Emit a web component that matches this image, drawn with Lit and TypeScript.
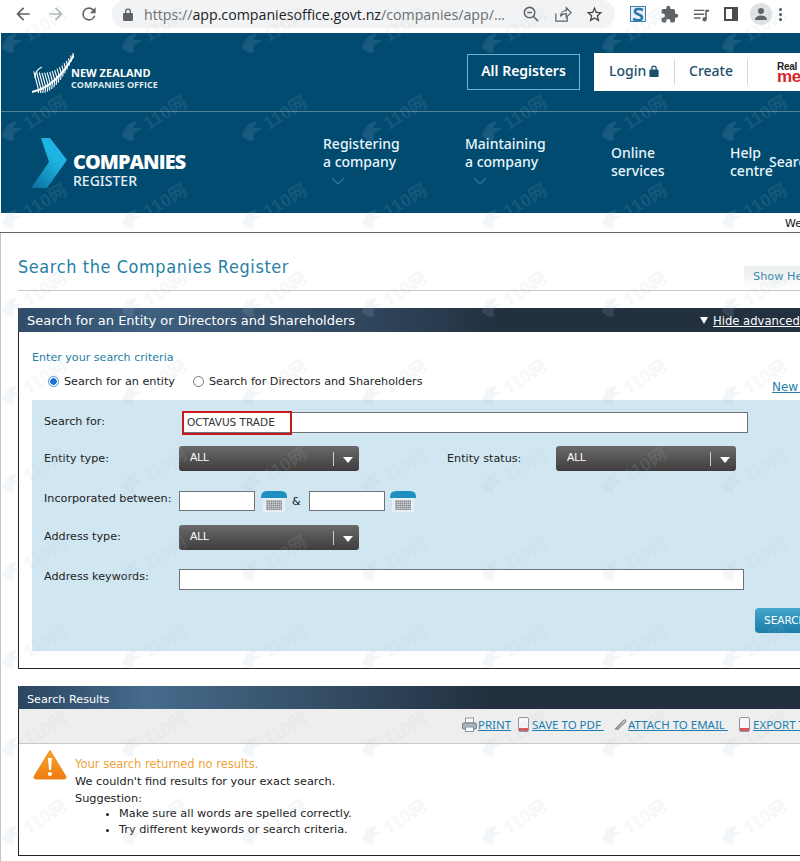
import { LitElement, html, css, svg } from "lit";
import { customElement } from "lit/decorators.js";

const fernFronds = (() => {
  let d = "";
  const n = 17;
  for (let i = 0; i < n; i++) {
    const t = 0.14 + (0.84 * i) / (n - 1);
    const u = 1 - t;
    const x = u * u * 2 + 2 * u * t * 26 + t * t * 44;
    const y = u * u * 39 + 2 * u * t * 34 + t * t * 2;
    const up = 20 * u * u + 4;
    const dn = 8 * Math.sin(Math.PI * t) + 1;
    d += `M${x.toFixed(1)} ${y.toFixed(1)}L${(x - 3 * u - up * 0.12).toFixed(1)} ${(y - up).toFixed(1)}`;
    d += `M${x.toFixed(1)} ${y.toFixed(1)}L${(x - dn * 0.1).toFixed(1)} ${(y + dn * 0.8).toFixed(1)}`;
  }
  return d;
})();

const marks = Array.from({ length: 7 * 11 }, (_, i) => i);

const ic = {
  back: svg`<path d="M20 11H7.83l5.59-5.59L12 4l-8 8 8 8 1.41-1.41L7.83 13H20v-2z"/>`,
  reload: svg`<path d="M17.65 6.35A7.96 7.96 0 0 0 12 4a8 8 0 1 0 7.73 10h-2.08A6 6 0 1 1 12 6c1.66 0 3.14.69 4.22 1.78L13 11h7V4l-2.35 2.35z"/>`,
  star: svg`<path d="M22 9.24l-7.19-.62L12 2 9.19 8.63 2 9.24l5.46 4.73L5.82 21 12 17.27 18.18 21l-1.63-7.03L22 9.24zM12 15.4l-3.76 2.27 1-4.28-3.32-2.88 4.38-.38L12 6.1l1.71 4.04 4.38.38-3.32 2.88 1 4.28L12 15.4z"/>`,
  puzzle: svg`<path d="M20.5 11H19V7a2 2 0 0 0-2-2h-4V3.5a2.5 2.5 0 0 0-5 0V5H4a2 2 0 0 0-2 2v3.8h1.5a2.7 2.7 0 0 1 0 5.4H2V20a2 2 0 0 0 2 2h3.8v-1.5a2.7 2.7 0 0 1 5.4 0V22H17a2 2 0 0 0 2-2v-4h1.5a2.5 2.5 0 0 0 0-5z"/>`,
};

@customElement("app-root")
export class AppRoot extends LitElement {
  static styles = css`
    :host { display: block; position: relative; width: 800px; height: 861px; overflow: hidden; background: #fff; font-family: "DejaVu Sans", sans-serif; font-size: 11px; color: #222; }
    a { color: inherit; }
    svg { display: block; flex: none; }

    .chrome { height: 33px; padding-bottom: 5px; box-sizing: border-box; display: flex; align-items: center; background: #fff; }
    .nav-ic { width: 20px; height: 20px; fill: #5f6368; margin-left: 13px; }
    .nav-ic.first { margin-left: 13px; }
    .nav-ic.off { fill: #b4b7ba; }
    .omni { margin-left: 13px; width: 503px; height: 28px; flex: none; border-radius: 14px; background: #f1f3f4; display: flex; align-items: center; padding-left: 11px; box-sizing: border-box; }
    .lock { width: 10px; height: 13px; fill: #5f6368; }
    .url { margin-left: 11px; width: 364px; flex: none; font-family: "Open Sans", sans-serif; font-size: 14.2px; letter-spacing: 0; color: #6a6e72; white-space: nowrap; overflow: hidden; }
    .url b { font-weight: 400; color: #202124; }
    .omni-ic { width: 19px; height: 19px; fill: #5f6368; margin-left: 13px; }
    .ext { display: flex; align-items: center; margin-left: 15px; }
    .ext-s { width: 16px; height: 16px; margin-right: 14px; }
    .ext-ic { width: 19px; height: 19px; fill: #5f6368; margin-right: 13px; }
    .sidebar { width: 14px; height: 14px; border: 2px solid #4a4d50; box-sizing: border-box; border-right-width: 6px; margin: 0 12px 0 0; }
    .avatar { width: 22px; height: 22px; border-radius: 50%; background: #dfe1e5; display: flex; align-items: center; justify-content: center; }
    .dots { margin-left: 7px; display: flex; flex-direction: column; gap: 2px; }
    .dots i { width: 3px; height: 3px; border-radius: 50%; background: #4a4d50; }

    header { height: 180px; margin-left: 1px; background: #014a70; color: #fff; font-family: "Noto Sans", sans-serif; }
    .h-top { height: 79px; border-bottom: 1px solid #4f8199; display: flex; align-items: flex-start; box-sizing: border-box; }
    .nz { margin: 20px 0 0 29px; width: 437px; flex: none; display: flex; }
    .nz-text { margin: 14px 0 0 -3px; font-family: "Open Sans", sans-serif; font-weight: 700; line-height: 12px; white-space: nowrap; }
    .nz-text div:first-child { font-size: 11px; }
    .nz-text div:last-child { font-size: 9px; color: #dfe9ef; }
    .all { margin-top: 21px; width: 113px; flex: none; height: 36px; padding-bottom: 3px; border: 1px solid #69b4d6; box-sizing: border-box; display: flex; align-items: center; justify-content: center; font-size: 14px; font-weight: 600; }
    .tools { margin: 20px 0 0 14px; width: 300px; flex: none; height: 38px; background: #fff; color: #1d4f6d; display: flex; align-items: center; font-size: 14px; font-weight: 500; }
    .login { width: 81px; flex: none; padding: 0 0 3px 15px; height: 26px; box-sizing: border-box; display: flex; align-items: center; gap: 3px; border-right: 1px solid #d8d8d8; }
    .create { width: 73px; flex: none; padding: 0 0 3px 14px; height: 26px; box-sizing: border-box; display: flex; align-items: center; border-right: 1px solid #d8d8d8; }
    .real { margin-left: 29px; font-family: "Liberation Sans", sans-serif; color: #222; font-size: 10px; line-height: 9px; letter-spacing: -0.3px; font-weight: 700; }
    .real span { display: block; color: #d8232a; font-size: 17px; line-height: 12px; font-weight: 700; }
    .h-nav { height: 101px; display: flex; align-items: flex-start; }
    .brand { margin: 26px 0 0 30px; width: 292px; flex: none; display: flex; }
    .brand-t { margin: 12px 0 0 6px; line-height: 1; }
    .brand-t strong { display: block; font-family: "Open Sans", sans-serif; font-weight: 800; font-size: 19.8px; letter-spacing: -0.9px; line-height: 23px; }
    .brand-t span { display: block; font-size: 14px; line-height: 16px; font-weight: 500; color: #e6f0f5; }
    .item { font-size: 14px; font-weight: 500; line-height: 18px; color: #e8f6fb; white-space: nowrap; flex: none; }
    .item.down { margin-top: 23px; }
    .item.flat { margin-top: 32px; }
    .i1 { width: 142px; }
    .i2 { width: 146px; }
    .i3 { width: 119px; }
    .i4 { width: 39px; }
    .chev { margin: 7px 0 0 8px; width: 14px; height: 7px; fill: none; stroke: #2b7d9e; stroke-width: 1.2; }
    .srch { margin-top: 40px; font-size: 14px; font-weight: 500; color: #e8f6fb; white-space: nowrap; }

    .strip { height: 20px; border-bottom: 1px solid #666; box-sizing: border-box; display: flex; justify-content: flex-end; align-items: flex-end; font-size: 11px; color: #111; line-height: 17px; }
    .strip span { width: 15px; overflow: hidden; white-space: nowrap; }

    main { border-left: 1px solid #c4c4c4; padding-left: 17px; height: 628px; }
    .ttl-row { width: 850px; height: 58px; border-bottom: 1px solid #c8c8c8; box-sizing: border-box; display: flex; align-items: flex-end; }
    .ttl { width: 726px; flex: none; font-size: 17.5px; line-height: 22px; padding-bottom: 12px; color: #2680a6; letter-spacing: 0.67px; font-family: "DejaVu Sans", sans-serif; font-weight: 400; margin: 0; transform: scaleX(0.92); transform-origin: left; white-space: nowrap; }
    .tab { width: 100px; height: 24px; padding-left: 9px; box-sizing: border-box; background: linear-gradient(#e9eded, #fff); border-radius: 3px 3px 0 0; color: #3f87ad; font-size: 11.3px; line-height: 22px; white-space: nowrap; }

    .panel { margin-top: 17px; width: 900px; border-left: 1px solid #222; border-bottom: 1px solid #222; box-sizing: border-box; }
    .p-head { height: 24px; display: flex; align-items: center; color: #fff; padding: 1px 0 0 9px; box-sizing: border-box; background: linear-gradient(90deg, #2f4c69 0, #3f6080 130px, #2d4257 380px, #22303f 480px); border-radius: 3px 3px 0 0; margin-left: -1px; font-size: 13px; }
    .p-head .name { width: 673px; flex: none; white-space: nowrap; }
    .tri { width: 8px; height: 7px; fill: #fff; margin-right: 5px; }
    .p-head u { font-size: 11.6px; white-space: nowrap; }
    .crit { margin: 19px 0 0 13px; color: #2680a6; font-size: 11.1px; line-height: 14px; }
    .radios { margin: 9px 0 0 13px; padding-left: 16px; width: 800px; box-sizing: border-box; height: 14px; display: flex; align-items: center; font-size: 11.2px; white-space: nowrap; }
    .radio { width: 11px; height: 11px; box-sizing: border-box; border: 1px solid #777; border-radius: 50%; background: #fff; margin-right: 4px; flex: none; }
    .radio.on { border-color: #4a90d9; background: radial-gradient(circle, #1a73d8 0 3px, #fff 3.6px); margin-right: 5px; }
    .gap2 { margin-left: 18px; margin-right: 5px; }
    .new { margin-left: auto; width: 60px; flex: none; padding-top: 12px; color: #2c7fa8; text-decoration: underline; font-size: 12px; }

    .form { margin: 12px 0 0 13px; width: 868px; height: 251px; padding: 12px 0 0 12px; box-sizing: border-box; background: #d0e6f1; }
    .row { display: flex; align-items: center; }
    .lbl { width: 135px; flex: none; font-size: 11.2px; white-space: nowrap; }
    .up3 { margin-bottom: 3px; }
    .up6 { margin-bottom: 6px; }
    .up7 { margin-bottom: 7px; }
    .ip { background: #fff; border: 1px solid #6d7277; box-sizing: border-box; height: 21px; font-size: 10.5px; line-height: 19px; padding-left: 4px; }
    .query { margin-left: 3px; width: 566px; flex: none; position: relative; color: #333; }
    .redbox { position: absolute; left: -1px; top: -2px; width: 110px; height: 24px; border: 2px solid #c8171d; box-sizing: border-box; }
    .r2 { margin-top: 13px; }
    .r3 { margin-top: 19px; }
    .r4 { margin-top: 13px; }
    .r5 { margin-top: 19px; }
    .sel { width: 180px; height: 25px; border-radius: 3px; background: linear-gradient(#6a6a6a, #3f3d3d); color: #fff; font-family: "Liberation Sans", sans-serif; font-size: 11px; display: flex; align-items: flex-start; padding: 5px 0 0 11px; box-sizing: border-box; flex: none; }
    .sel span { width: 143px; flex: none; letter-spacing: -0.2px; }
    .sel i { width: 1px; height: 14px; background: #ccc; margin-top: 1px; }
    .sel svg { width: 10px; height: 6px; fill: #fff; margin: 6px 0 0 9px; }
    .lbl2 { margin-left: 88px; width: 109px; flex: none; font-size: 11.2px; white-space: nowrap; }
    .date { width: 76px; height: 20px; flex: none; }
    .cal { width: 26px; height: 22px; margin-left: 6px; }
    .amp { margin: 0 11px 0 5px; font-size: 11px; width: 6px; flex: none; }
    .cal2 { margin-left: 5px; }
    .kw { width: 565px; flex: none; }
    .btn { margin: 18px 0 0 711px; width: 100px; height: 25px; border-radius: 4px; background: linear-gradient(#45a7cc, #1a7ca8); color: #fff; font-size: 10.5px; line-height: 24px; padding-left: 9px; box-sizing: border-box; }
    .form-end { height: 17px; }

    .p-head.res { height: 23px; font-size: 11.2px; padding-top: 3px; background: linear-gradient(90deg, #2a4560 0, #466b8c 130px, #2e4459 360px, #22303f 470px); }
    .bar { height: 35px; padding-bottom: 3px; background: #eee; border-bottom: 1px solid #c8c8c8; box-sizing: border-box; display: flex; align-items: center; padding-left: 443px; color: #1b7cb0; font-family: "Noto Sans", sans-serif; font-size: 11.5px; white-space: nowrap; }
    .bar svg { width: 15px; height: 15px; margin-right: 1px; }
    .t1 { width: 38px; flex: none; }
    .t2 { width: 80px; flex: none; }
    .t3 { width: 109px; flex: none; }
    .body { display: flex; height: 111px; padding: 5px 0 0 14px; box-sizing: border-box; }
    .warn { width: 34px; height: 31px; }
    .msg { margin: 6px 0 0 8px; font-size: 11.3px; line-height: 16.4px; color: #222; }
    .msg .o { color: #eea33a; font-size: 11.5px; line-height: 19px; }
    .msg .sug { margin-top: 1px; }
    .msg ul { margin: -2px 0 0; padding: 0 0 0 44px; list-style: disc; }

    .wm { position: absolute; left: -27px; top: -14px; display: grid; grid-template-columns: repeat(7, 120px); grid-auto-rows: 88px; pointer-events: none; }
    .mk { display: flex; align-items: center; justify-content: center; gap: 2px; transform: rotate(-32deg); color: rgba(180, 200, 210, 0.13); font-family: "Liberation Sans", "Noto Sans CJK SC", sans-serif; font-size: 18px; font-weight: 700; white-space: nowrap; }
    .mk svg { width: 24px; height: 20px; fill: rgba(180, 200, 210, 0.14); }
  `;

  private toolDoc() {
    return html`<svg viewBox="0 0 15 15"><rect x="2.500" y=".5" width="10" height="14" rx="1.500" fill="#f8f8fa" stroke="#8b97a5"/><rect x="3" y="11" width="9" height="3" fill="#d9545c"/></svg>`;
  }

  private cal(extra = "") {
    const cells = [];
    for (let y = 0; y < 5; y++) for (let x = 0; x < 8; x++) cells.push(svg`<rect x=${5.5 + x * 2} y=${10.5 + y * 2} width="1.300" height="1.300" fill="#555"/>`);
    return html`<svg class="cal ${extra}" viewBox="0 0 26 22"><rect x="2" y="7" width="22" height="15" fill="#e6eff3"/><path d="M0 7Q0 1 6 1H20Q26 1 26 7V8H0Z" fill="#1f8fc0"/>${cells}</svg>`;
  }

  private sel() {
    return html`<div class="sel"><span>ALL</span><i></i><svg viewBox="0 0 10 6"><path d="M0 0H10L5 6Z"/></svg></div>`;
  }

  render() {
    return html`
      <div class="chrome">
        <svg class="nav-ic first" viewBox="0 0 24 24">${ic.back}</svg>
        <svg class="nav-ic off" viewBox="0 0 24 24"><g transform="rotate(180 12 12)">${ic.back}</g></svg>
        <svg class="nav-ic" viewBox="0 0 24 24">${ic.reload}</svg>
        <div class="omni">
          <svg class="lock" viewBox="0 0 10 13"><path d="M2 5V3.5a3 3 0 0 1 6 0V5h1a1 1 0 0 1 1 1v6a1 1 0 0 1-1 1H1a1 1 0 0 1-1-1V6a1 1 0 0 1 1-1zm1.3 0h3.4V3.5a1.7 1.7 0 0 0-3.4 0z"/></svg>
          <div class="url">https://<b>app.companiesoffice.govt.nz</b>/companies/app/...</div>
          <svg class="omni-ic" viewBox="0 0 20 20" fill="none" stroke="#5f6368" stroke-width="1.6"><circle cx="9" cy="8" r="5.5" fill="none"/><path d="M13 12l5 5M6.5 8h5" fill="none"/></svg>
          <svg class="omni-ic" viewBox="0 0 20 20"><path d="M3 9v8h12v-4M8 12c0-4 3-6 6-6V3l5 5-5 5V9c-3 0-5 1-6 3z" fill="none" stroke="#5f6368" stroke-width="1.3"/></svg>
          <svg class="omni-ic" viewBox="0 0 24 24" style="fill:#444">${ic.star}</svg>
        </div>
        <div class="ext">
          <svg class="ext-s" viewBox="0 0 16 16"><rect x=".5" y=".5" width="15" height="15" fill="#e9f1f6" stroke="#3c7fa8"/><path d="M13 4C9 2 4 3 5 6s8 2 7 6-6 2-9 1" fill="none" stroke="#2c78b0" stroke-width="2.6"/></svg>
          <svg class="ext-ic" viewBox="0 0 24 24">${ic.puzzle}</svg>
          <svg class="ext-ic" viewBox="0 0 20 20"><path d="M2 5h11v1.4H2zM2 9h11v1.4H2zM2 13h7v1.4H2zM14 5h4v2h-2.4v8a2.3 2.3 0 1 1-1.6-2.2z"/></svg>
          <div class="sidebar"></div>
          <div class="avatar"><svg width="14" height="14" viewBox="0 0 14 14" fill="#5f6368"><circle cx="7" cy="4" r="3"/><path d="M1 13c0-3 3-4.5 6-4.5s6 1.500 6 4.500z"/></svg></div>
          <div class="dots"><i></i><i></i><i></i></div>
        </div>
      </div>

      <header>
        <div class="h-top">
          <div class="nz">
            <svg width="44" height="40" viewBox="0 0 44 40" fill="none" stroke="#fff">
              <path d="${fernFronds}" stroke-width="1.100"/>
              <path d="M5 25Q5 17 12 14" stroke-width="1.200"/>
              <path d="M2 39Q26 34 44 2" stroke-width="2"/>
            </svg>
            <div class="nz-text"><div>NEW ZEALAND</div><div>COMPANIES OFFICE</div></div>
          </div>
          <div class="all">All Registers</div>
          <div class="tools">
            <div class="login">Login <svg width="10" height="12" viewBox="0 0 10 13" fill="#1d4f6d"><path d="M2 5V3.500a3 3 0 0 1 6 0V5h1a1 1 0 0 1 1 1v6a1 1 0 0 1-1 1H1a1 1 0 0 1-1-1V6a1 1 0 0 1 1-1zm1.300 0h3.400V3.500a1.700 1.700 0 0 0-3.400 0z"/></svg></div>
            <div class="create">Create</div>
            <div class="real">Real<span>me</span></div>
          </div>
        </div>
        <div class="h-nav">
          <div class="brand">
            <svg width="36" height="50" viewBox="0 0 36 50">
              <defs><linearGradient id="cg" x1="0" y1="1" x2="0.5" y2="0.3"><stop offset="0" stop-color="#0c6d9c"/><stop offset="1" stop-color="#1db4e4"/></linearGradient></defs>
              <path d="M10 0H19L36 22L16 50H0L18 24Z" fill="url(#cg)"/>
            </svg>
            <div class="brand-t"><strong>COMPANIES</strong><span>REGISTER</span></div>
          </div>
          <div class="item down i1">Registering<br />a company<svg class="chev" viewBox="0 0 14 7"><path d="M1 0L7 6L13 0"/></svg></div>
          <div class="item down i2">Maintaining<br />a company<svg class="chev" viewBox="0 0 14 7"><path d="M1 0L7 6L13 0"/></svg></div>
          <div class="item flat i3">Online<br />services</div>
          <div class="item flat i4">Help<br />centre</div>
          <div class="srch">Search</div>
        </div>
      </header>

      <div class="strip"><span>Welcome</span></div>

      <main>
        <div class="ttl-row">
          <h1 class="ttl">Search the Companies Register</h1>
          <div class="tab">Show Help</div>
        </div>

        <section class="panel">
          <div class="p-head">
            <div class="name">Search for an Entity or Directors and Shareholders</div>
            <svg class="tri" viewBox="0 0 8 7"><path d="M0 0H8L4 7Z"/></svg>
            <u>Hide advanced search</u>
          </div>
          <div class="crit">Enter your search criteria</div>
          <div class="radios">
            <span class="radio on"></span>Search for an entity
            <span class="radio gap2"></span>Search for Directors and Shareholders
            <a class="new">New to</a>
          </div>
          <div class="form">
            <div class="row">
              <div class="lbl up3">Search for:</div>
              <div class="ip query">OCTAVUS TRADE<div class="redbox"></div></div>
            </div>
            <div class="row r2">
              <div class="lbl">Entity type:</div>
              ${this.sel()}
              <div class="lbl2">Entity status:</div>
              ${this.sel()}
            </div>
            <div class="row r3">
              <div class="lbl up6">Incorporated between:</div>
              <div class="ip date"></div>
              ${this.cal()}
              <div class="amp">&amp;</div>
              <div class="ip date"></div>
              ${this.cal("cal2")}
            </div>
            <div class="row r4">
              <div class="lbl up3">Address type:</div>
              ${this.sel()}
            </div>
            <div class="row r5">
              <div class="lbl up7">Address keywords:</div>
              <div class="ip kw"></div>
            </div>
            <div class="btn">SEARCH</div>
          </div>
          <div class="form-end"></div>
        </section>

        <section class="panel">
          <div class="p-head res">Search Results</div>
          <div class="bar">
            <svg viewBox="0 0 15 15"><rect x="3.500" y="1" width="8" height="5" fill="#fff" stroke="#8a96a3"/><rect x=".5" y="6" width="14" height="6" rx="1.500" fill="#aab4bf" stroke="#6f7a85"/><rect x="3.500" y="10" width="8" height="4.500" fill="#fff" stroke="#8a96a3"/></svg>
            <div class="t1"><u>PRINT</u></div>
            ${this.toolDoc()}
            <div class="t2"><u>SAVE TO PDF&nbsp;</u></div>
            <svg viewBox="0 0 15 15"><path d="M3 12.500L11.500 3.500c1.500-1.500 3 0 1.700 1.500L6 12c-.8.800-2 0-1.200-1L10 5.500" fill="none" stroke="#8a8f94" stroke-width="1.300"/></svg>
            <div class="t3"><u>ATTACH TO EMAIL&nbsp;</u></div>
            ${this.toolDoc()}
            <div><u>EXPORT TO EXCEL</u></div>
          </div>
          <div class="body">
            <svg class="warn" viewBox="0 0 34 31">
              <defs><linearGradient id="wg" x1="0" y1="0" x2="0" y2="1"><stop offset="0" stop-color="#f9a12e"/><stop offset="1" stop-color="#ef7d12"/></linearGradient></defs>
              <path d="M17 1.500L33 27.500Q33.500 30 31 30H3Q.500 30 1 27.500Z" fill="url(#wg)" stroke="#e98a1c" stroke-linejoin="round"/>
              <path d="M15 9H19L18 21H16Z" fill="#fff"/><circle cx="17" cy="25" r="2" fill="#fff"/>
            </svg>
            <div class="msg">
              <div class="o">Your search returned no results.</div>
              <div>We couldn't find results for your exact search.</div>
              <div class="sug">Suggestion:</div>
              <ul>
                <li>Make sure all words are spelled correctly.</li>
                <li>Try different keywords or search criteria.</li>
              </ul>
            </div>
          </div>
        </section>
      </main>

      <div class="wm" aria-hidden="true">
        ${marks.map(() => html`<div class="mk"><svg viewBox="0 0 24 20"><path d="M1 8L12 2L22 4L15 8L23 13L13 13L8 19L4 16Z"/></svg>110网</div>`)}
      </div>
    `;
  }
}
